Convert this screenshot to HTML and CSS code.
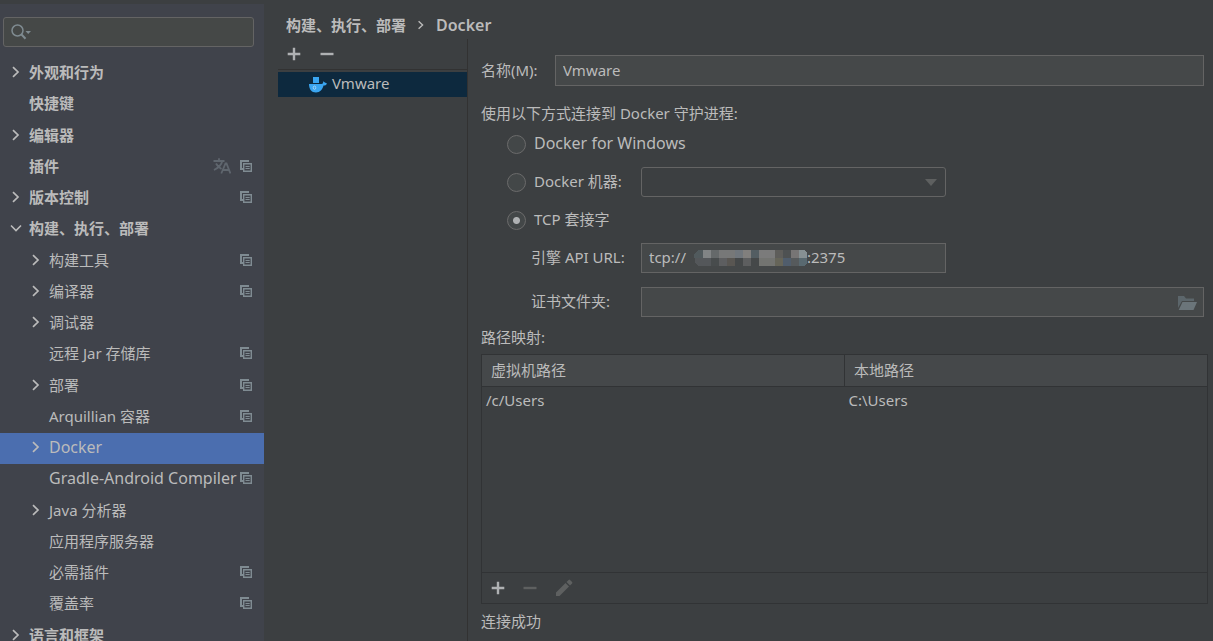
FILE: index.html
```html
<!DOCTYPE html>
<html lang="zh-CN">
<head>
<meta charset="utf-8">
<title>Docker</title>
<link rel="stylesheet" href="styles.css">
</head>
<body>
<svg class="defs" aria-hidden="true">
  <symbol id="chev" viewBox="0 0 10 12"><path d="M2 1.200 7 6 2 10.800" fill="none" stroke="currentColor" stroke-width="1.700"/></symbol>
  <symbol id="down" viewBox="0 0 12 12"><path d="M1 3.500 6 8.500 11 3.500" fill="none" stroke="currentColor" stroke-width="1.600"/></symbol>
  <symbol id="copy" viewBox="0 0 12 12"><path d="M9 1H1V9H3" fill="none" stroke="currentColor" stroke-width="2"/><path d="M3.700 11.300V3.700H11.300V11.300Z" fill="none" stroke="currentColor" stroke-width="1.400"/><path d="M5.500 6.500H9.700M5.500 8.500H9.700" stroke="currentColor" stroke-width="1"/></symbol>
  <symbol id="plus" viewBox="0 0 14 14"><path d="M7 .7V13.300M.7 7H13.300" stroke="currentColor" stroke-width="2.400"/></symbol>
  <symbol id="minus" viewBox="0 0 14 14"><path d="M.5 7H13.500" stroke="currentColor" stroke-width="2.400"/></symbol>
</svg>
<div class="app">
  <aside class="sidebar">
    <div class="search">
      <svg class="search-icon" viewBox="0 0 20 16" aria-hidden="true"><circle cx="6.500" cy="6.500" r="5.500" fill="none" stroke="currentColor" stroke-width="1.500"/><path d="M10.500 10.500 14.500 14.800" stroke="currentColor" stroke-width="2"/><path d="M14.500 7H20L17.200 10Z" fill="currentColor"/></svg>
      <input class="search-input" type="search" aria-label="搜索">
    </div>
    <ul class="tree">
      <li class="row top"><svg class="arrow"><use href="#chev"/></svg><span class="name">外观和行为</span></li>
      <li class="row top"><span class="arrow"></span><span class="name">快捷键</span></li>
      <li class="row top"><svg class="arrow"><use href="#chev"/></svg><span class="name">编辑器</span></li>
      <li class="row top"><span class="arrow"></span><span class="name">插件</span><svg class="lang" viewBox="0 0 18 16" aria-hidden="true"><path d="M.5 3H11.500M6 .3V3M9.300 3C8.500 7 5 10 1 12M3 5.500C4.500 8.500 6.500 9.800 8.500 11M8.300 15.500 12.500 5.500H13.500L17.400 15.500M10 12H16" fill="none" stroke="currentColor" stroke-width="1.800"/></svg><svg class="copy"><use href="#copy"/></svg></li>
      <li class="row top"><svg class="arrow"><use href="#chev"/></svg><span class="name">版本控制</span><svg class="copy"><use href="#copy"/></svg></li>
      <li class="row top"><svg class="arrow"><use href="#down"/></svg><span class="name">构建、执行、部署</span></li>
      <li class="row sub"><svg class="arrow"><use href="#chev"/></svg><span class="name">构建工具</span><svg class="copy"><use href="#copy"/></svg></li>
      <li class="row sub"><svg class="arrow"><use href="#chev"/></svg><span class="name">编译器</span><svg class="copy"><use href="#copy"/></svg></li>
      <li class="row sub"><svg class="arrow"><use href="#chev"/></svg><span class="name">调试器</span></li>
      <li class="row sub"><span class="arrow"></span><span class="name">远程 Jar 存储库</span><svg class="copy"><use href="#copy"/></svg></li>
      <li class="row sub"><svg class="arrow"><use href="#chev"/></svg><span class="name">部署</span><svg class="copy"><use href="#copy"/></svg></li>
      <li class="row sub"><span class="arrow"></span><span class="name">Arquillian 容器</span><svg class="copy"><use href="#copy"/></svg></li>
      <li class="row sub selected"><svg class="arrow"><use href="#chev"/></svg><span class="name latin">Docker</span></li>
      <li class="row sub"><span class="arrow"></span><span class="name latin">Gradle-Android Compiler</span><svg class="copy"><use href="#copy"/></svg></li>
      <li class="row sub"><svg class="arrow"><use href="#chev"/></svg><span class="name">Java 分析器</span></li>
      <li class="row sub"><span class="arrow"></span><span class="name">应用程序服务器</span></li>
      <li class="row sub"><span class="arrow"></span><span class="name">必需插件</span><svg class="copy"><use href="#copy"/></svg></li>
      <li class="row sub"><span class="arrow"></span><span class="name">覆盖率</span><svg class="copy"><use href="#copy"/></svg></li>
      <li class="row top"><svg class="arrow"><use href="#chev"/></svg><span class="name">语言和框架</span></li>
    </ul>
  </aside>
  <main class="main">
    <nav class="crumbs"><span>构建、执行、部署</span><svg class="crumb-sep"><use href="#chev"/></svg><span class="latin">Docker</span></nav>
    <div class="content">
      <section class="servers">
        <div class="server-tools">
          <button class="tool" type="button" aria-label="添加"><svg class="tool-icon"><use href="#plus"/></svg></button>
          <button class="tool" type="button" aria-label="移除"><svg class="tool-icon"><use href="#minus"/></svg></button>
        </div>
        <div class="server">
          <svg class="whale" viewBox="0 0 18 16" aria-hidden="true"><path d="M4 0H10V6H4Z" fill="#3aa5f0"/><path d="M0 7H12.500C13.800 7 14.500 6 14 4.300L15.500 5.300 18 6.500C17.300 8.200 16 8.500 14.500 8.500 13.500 12.500 11 15.500 7 15.500 2.500 15.500 0 12 0 7Z" fill="#3aa5f0"/><ellipse cx="5.500" cy="10.700" rx="1.300" ry="1.700" fill="#3aa5f0" stroke="#b5daf4" stroke-width=".8"/></svg>
          <span class="server-name">Vmware</span>
        </div>
      </section>
      <form class="form">
        <div class="field name-row"><label class="name-label" for="name">名称(M):</label><input class="text grow" id="name" type="text" value="Vmware"></div>
        <p class="caption">使用以下方式连接到 Docker 守护进程:</p>
        <div class="options">
          <div class="field"><input class="radio" type="radio" name="mode" id="win"><label class="latin" for="win">Docker for Windows</label></div>
          <div class="field"><input class="radio" type="radio" name="mode" id="machine"><label class="machine-label" for="machine">Docker 机器:</label>
            <div class="combo"><select class="select" aria-label="Docker 机器"><option></option></select><svg class="combo-arrow" viewBox="0 0 12 7" aria-hidden="true"><path d="M0 0H12L6 7Z" fill="currentColor"/></svg></div></div>
          <div class="field"><input class="radio" type="radio" name="mode" id="tcp" checked><label for="tcp">TCP 套接字</label></div>
          <div class="field detail"><label class="detail-label" for="url">引擎 API URL:</label>
            <div class="url"><input class="text url-input" id="url" type="text" value="tcp://                               :2375">
              <svg class="mosaic" viewBox="0 0 114 16" aria-hidden="true" shape-rendering="crispEdges">
                <path d="M0 4 4 0H9V8H0Z" fill="#515a5d"/><path d="M9 0H17V8H9Z" fill="#818485"/><path d="M17 0H25V8H17Z" fill="#65696a"/><path d="M25 0H41V8H25Z" fill="#777878"/><path d="M41 0H49V8H41Z" fill="#70767c"/><path d="M49 0H57V8H49Z" fill="#817f7d"/><path d="M57 0H65V8H57Z" fill="#535d62"/><path d="M65 0H81V8H65Z" fill="#7b7b7b"/><path d="M81 0H89V8H81Z" fill="#5e5d5a"/><path d="M89 0H97V8H89Z" fill="#4e5152"/><path d="M97 0H105V8H97Z" fill="#777575"/><path d="M105 0H110L113 3V8H105Z" fill="#869093"/>
                <path d="M1 8H17V16H4L1 13Z" fill="#54575a"/><path d="M17 8H25V16H17Z" fill="#484c4d"/><path d="M25 8H33V16H25Z" fill="#5d5e60"/><path d="M33 8H41V16H33Z" fill="#595652"/><path d="M49 8H57V16H49Z" fill="#5d5e5f"/><path d="M65 8H81V16H65Z" fill="#737471"/><path d="M81 8H89V16H81Z" fill="#666559"/><path d="M89 8H97V16H89Z" fill="#505d6c"/><path d="M97 8H105V16H97Z" fill="#565a5c"/><path d="M105 8H113V13L110 16H105Z" fill="#596970"/>
              </svg></div></div>
          <div class="field detail cert"><label class="detail-label" for="cert">证书文件夹:</label>
            <div class="folder"><input class="text folder-input" id="cert" type="text">
              <button class="browse" type="button" aria-label="浏览"><svg class="browse-icon" viewBox="0 0 19 14" aria-hidden="true"><path d="M0 0H6L8 2.500H16V5H4L0 12Z" fill="#5c666b"/><path d="M4.500 6H19L15.500 14H.7Z" fill="#6b757a"/></svg></button></div></div>
        </div>
        <p class="caption">路径映射:</p>
        <div class="mapping">
          <table class="table">
            <thead><tr><th>虚拟机路径</th><th>本地路径</th></tr></thead>
            <tbody><tr><td>/c/Users</td><td>C:\Users</td></tr></tbody>
          </table>
          <div class="table-tools">
            <button class="tool" type="button" aria-label="添加映射"><svg class="tool-icon"><use href="#plus"/></svg></button>
            <button class="tool" type="button" aria-label="移除映射" disabled><svg class="tool-icon"><use href="#minus"/></svg></button>
            <button class="tool" type="button" aria-label="编辑映射" disabled><svg class="pencil" viewBox="0 0 18 18" aria-hidden="true"><path d="M1 13.500 10.500 4 14 7.500 4.500 17H1ZM11.500 3 13.600.9Q14.300.3 15 .9L17.100 3Q17.700 3.700 17.100 4.400L15 6.500Z" fill="currentColor"/></svg></button>
          </div>
        </div>
        <p class="status">连接成功</p>
      </form>
    </div>
  </main>
</div>
</body>
</html>
```
FILE: styles.css
```css
* { box-sizing: border-box; }
body {
  margin: 0;
  background: #3c3f41;
  color: #bbbbbb;
  font: 15px/24px "Noto Sans", "Noto Sans CJK SC", sans-serif;
}
input, select, button { font: inherit; color: inherit; margin: 0; }
p { margin: 0; }
.latin { font-size: 16px; }
.defs { position: absolute; width: 0; height: 0; }
.app { display: flex; height: 100vh; overflow: hidden; }

/* Settings tree */
.sidebar {
  flex: 0 0 264px;
  border-top: 4px solid #3c3f41;
  padding-top: 13px;
  background: #40434b;
  overflow: hidden;
}
.search {
  display: flex;
  align-items: center;
  gap: 4px;
  height: 30px;
  margin: 0 10px 11px 3px;
  padding: 0 7px;
  border: 1px solid #646464;
  border-radius: 3px;
  background: #454847;
}
.search-icon { width: 20px; height: 16px; color: #7f8b91; }
.search-input { flex: 1; min-width: 0; border: 0; outline: 0; padding: 0; background: none; }
.tree { list-style: none; margin: 0; padding: 0; }
.row {
  display: flex;
  align-items: center;
  height: 31px;
  padding: 0 12px 4px 10px;
  white-space: nowrap;
}
.row:nth-child(4n+2) { height: 32px; }
.top { font-weight: 600; }
.sub { padding-left: 30px; }
.selected { background: #4b6eaf; }
.arrow { flex: none; width: 12px; height: 12px; margin-right: 7px; }
.name { flex: 1; }
.copy { flex: none; width: 12px; height: 12px; color: #7f8b92; }
.lang { width: 18px; height: 16px; margin-right: 9px; color: #5f666e; }

/* Page area */
.main { flex: 1; min-width: 0; display: flex; flex-direction: column; padding-left: 14px; }
.crumbs {
  display: flex;
  align-items: center;
  height: 39px;
  padding: 10px 8px 0;
  font-weight: 600;
}
.crumb-sep { width: 8px; height: 10px; margin: 0 11px; }
.content { flex: 1; min-height: 0; display: flex; }
.servers { flex: 0 0 190px; border-right: 1px solid #323232; }
.server-tools {
  display: flex;
  align-items: center;
  gap: 19px;
  height: 31px;
  margin-bottom: 2px;
  padding-left: 9px;
  border-bottom: 1px solid #323232;
}
.tool { display: flex; padding: 0; border: 0; background: none; color: #afb1b3; }
.tool:disabled { color: #5e6060; }
.tool-icon { width: 14px; height: 14px; }
.server {
  display: flex;
  align-items: center;
  gap: 5px;
  height: 25px;
  padding-left: 31px;
  background: #0d293e;
}
.server-name { padding-bottom: 3px; }
.whale { width: 18px; height: 16px; }

/* Docker form */
.form {
  flex: 1;
  min-width: 0;
  display: flex;
  flex-direction: column;
  padding: 16px 5px 8px 13px;
}
.field { display: flex; align-items: center; height: 30px; }
.field label { padding-bottom: 2px; }
.name-row { height: 31px; margin: 0 4px 15px 0; }
.name-label { width: 74px; }
.text {
  width: 100%;
  height: 30px;
  padding: 0 7px 2px;
  border: 1px solid #646464;
  outline: 0;
  background: #454849;
}
.grow { flex: 1; height: 31px; }
.caption { height: 24px; }
.options { display: flex; flex-direction: column; gap: 8px; margin: 4px 4px 8px 26px; }
.radio {
  appearance: none;
  width: 19px;
  height: 19px;
  margin-right: 8px;
  border: 1px solid #6b6b6b;
  border-radius: 50%;
  background: #434748;
}
.radio:checked { background: radial-gradient(circle, #afb1b3 3px, #434748 4px); }
.machine-label { width: 107px; }
.combo, .url, .folder { position: relative; }
.combo, .url { width: 305px; }
.select {
  appearance: none;
  display: block;
  width: 100%;
  height: 30px;
  border: 1px solid #646464;
  border-radius: 3px;
  outline: 0;
  background: #3c3f41;
}
.combo-arrow { position: absolute; right: 9px; top: 12px; width: 12px; height: 7px; color: #5e6060; }
.detail { padding-left: 24px; }
.detail-label { width: 110px; }
.cert { margin-top: 6px; }
.url-input, .folder-input { display: block; }
.mosaic { position: absolute; left: 53px; top: 7px; width: 114px; height: 16px; }
.folder { flex: 1; }
.browse { position: absolute; right: 7px; top: 9px; display: flex; padding: 0; border: 0; background: none; }
.browse-icon { width: 19px; height: 14px; }
.mapping {
  flex: 1;
  display: flex;
  flex-direction: column;
  justify-content: space-between;
  margin: 5px 0;
  border: 1px solid #313335;
}
.table { width: 100%; table-layout: fixed; border-collapse: collapse; }
.table th {
  height: 31px;
  padding: 0 9px;
  border-bottom: 1px solid #313335;
  background: #45484a;
  font-weight: 400;
  text-align: left;
}
.table th + th { border-left: 1px solid #313335; }
.table td { height: 30px; padding: 0 4px 2px; }
.table-tools {
  display: flex;
  align-items: center;
  gap: 18px;
  height: 31px;
  padding-left: 9px;
  border-top: 1px solid #313335;
}
.pencil { width: 18px; height: 18px; }
.status { height: 24px; }
```
